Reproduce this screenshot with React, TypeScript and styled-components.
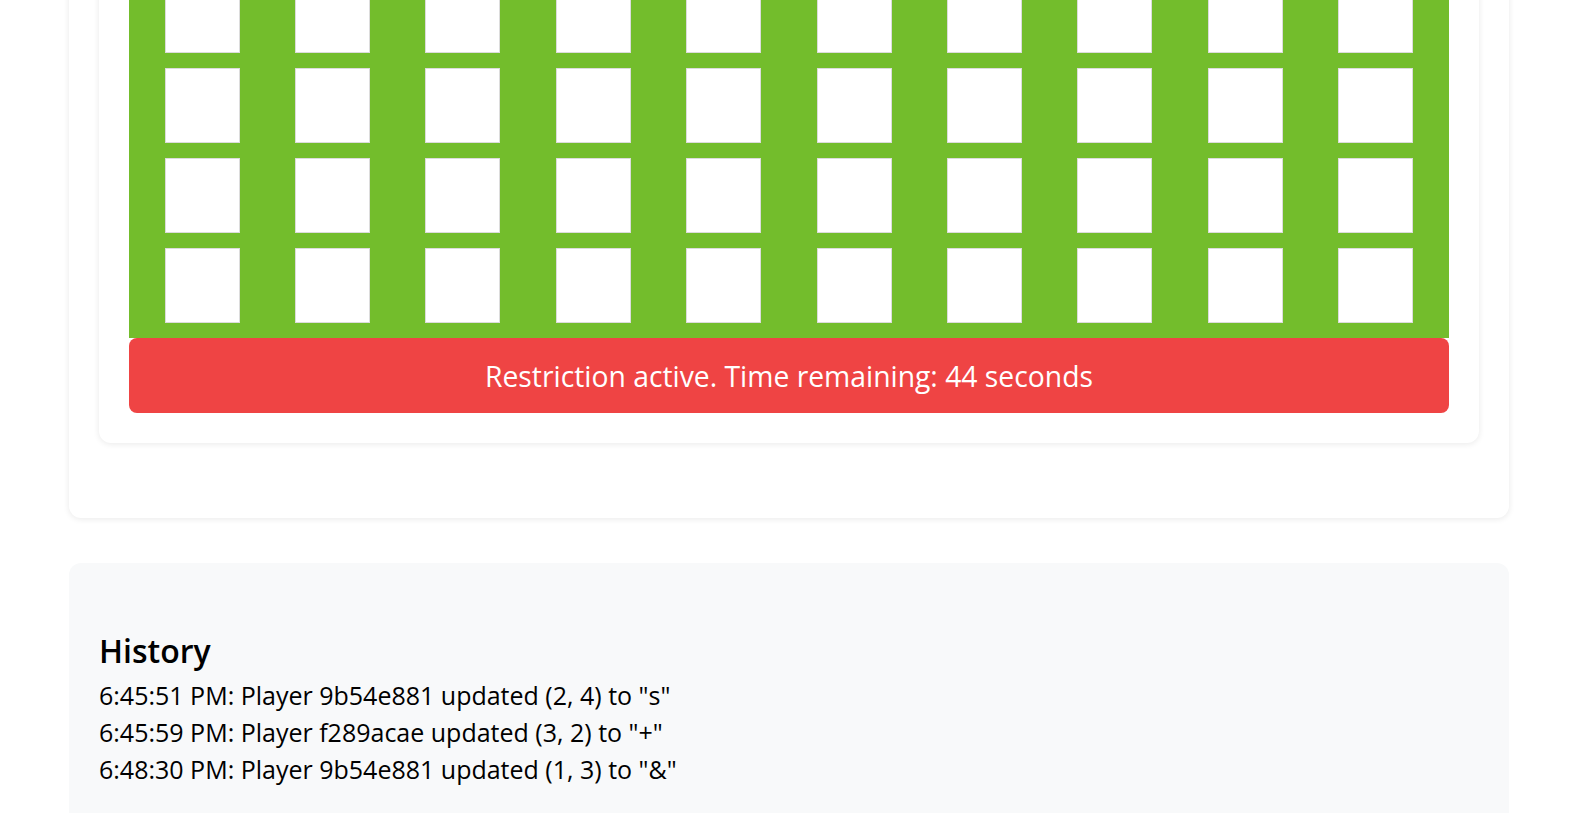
import React from "react";
import styled, { createGlobalStyle } from "styled-components";

const GlobalStyle = createGlobalStyle`
  html, body {
    margin: 0;
    padding: 0;
    background: #ffffff;
    font-family: "Open Sans", "Noto Sans", sans-serif;
    color: #000;
  }
`;

const Page = styled.div`
  width: 1440px;
  margin: -97px 0 0 69px;
  display: flex;
  flex-direction: column;
  gap: 45px;
`;

const OuterCard = styled.section`
  background: #fff;
  border-radius: 12px;
  box-shadow: 0 1px 6px rgba(0, 0, 0, 0.09);
  padding: 30px 30px 75px;
`;

const InnerCard = styled.div`
  background: #fff;
  border-radius: 12px;
  box-shadow: 0 1px 6px rgba(0, 0, 0, 0.09);
  padding: 30px;
`;

const Board = styled.div`
  display: grid;
  grid-template-columns: repeat(10, 1fr);
  row-gap: 15px;
  justify-items: center;
  padding: 15px 8px;
  background: #73bd2c;
`;

const Cell = styled.div`
  box-sizing: border-box;
  width: 75px;
  height: 75px;
  background: #fff;
  border: 1px solid #dcdcdc;
`;

const Banner = styled.div`
  height: 75px;
  border-radius: 8px;
  background: #ef4444;
  color: #fff;
  display: flex;
  align-items: center;
  justify-content: center;
  font-size: 28.3px;
`;

const HistoryBox = styled.section`
  background: #f8f9fa;
  border-radius: 12px;
  padding: 66px 30px 40px;
`;

const Heading = styled.h2`
  margin: 0 0 4px;
  font-size: 32px;
  font-weight: 600;
  line-height: 44px;
`;

const Entry = styled.div`
  font-size: 25px;
  line-height: 37px;
`;

const history = [
  '6:45:51 PM: Player 9b54e881 updated (2, 4) to "s"',
  '6:45:59 PM: Player f289acae updated (3, 2) to "+"',
  '6:48:30 PM: Player 9b54e881 updated (1, 3) to "&"',
];

export default function App() {
  const cells = Array.from({ length: 40 }, (_, i) => i);
  return (
    <>
      <GlobalStyle />
      <Page>
        <OuterCard>
          <InnerCard>
            <Board>
              {cells.map((i) => (
                <Cell key={i} />
              ))}
            </Board>
            <Banner>Restriction active. Time remaining: 44 seconds</Banner>
          </InnerCard>
        </OuterCard>
        <HistoryBox>
          <Heading>History</Heading>
          {history.map((h) => (
            <Entry key={h}>{h}</Entry>
          ))}
        </HistoryBox>
      </Page>
    </>
  );
}
